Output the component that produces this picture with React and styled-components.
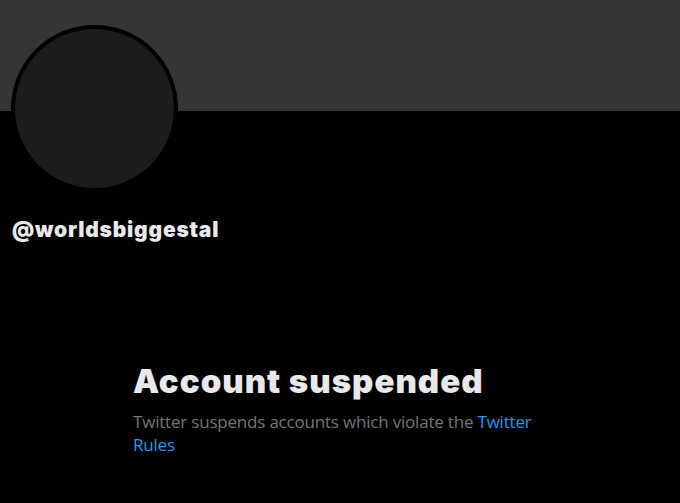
import * as React from 'react';
import styled, { createGlobalStyle } from 'styled-components';

const Global = createGlobalStyle`
  html, body {
    margin: 0;
    padding: 0;
    background: #000;
  }
  body {
    font-family: "Open Sans", "Noto Sans", "Liberation Sans", sans-serif;
    color: #e7e9ea;
  }
`;

const Page = styled.div`
  width: 680px;
  height: 503px;
  background: #000;
  overflow: hidden;
`;

const Banner = styled.div`
  height: 111px;
  background: #333639;
`;

const ProfileHead = styled.div`
  padding: 0 0 0 11px;
`;

const Avatar = styled.div`
  width: 159px;
  height: 159px;
  margin-top: -86px;
  border: 4px solid #000;
  border-radius: 50%;
  background: #1b1c1f;
`;

const Handle = styled.div`
  margin-top: 25px;
  padding-left: 1px;
  font-family: Inter, "Open Sans", sans-serif;
  font-size: 21px;
  line-height: 25px;
  font-weight: 900;
  letter-spacing: 0.8px;
`;

const Empty = styled.div`
  padding: 120px 0 0 133px;
  width: 410px;
`;

const Title = styled.h1`
  margin: 0;
  font-family: Inter, "Open Sans", sans-serif;
  font-size: 33px;
  line-height: 38px;
  font-weight: 900;
  letter-spacing: 1px;
`;

const Subtitle = styled.p`
  margin: 10px 0 0;
  font-size: 17px;
  line-height: 23px;
  letter-spacing: -0.2px;
  color: #71767b;
`;

const Link = styled.a`
  color: #1d9bf0;
  text-decoration: none;
`;

export default function App() {
  return (
    <Page>
      <Global />
      <Banner />
      <ProfileHead>
        <Avatar />
        <Handle>@worldsbiggestal</Handle>
      </ProfileHead>
      <Empty>
        <Title>Account suspended</Title>
        <Subtitle>
          Twitter suspends accounts which violate the <Link href="#">Twitter Rules</Link>
        </Subtitle>
      </Empty>
    </Page>
  );
}
